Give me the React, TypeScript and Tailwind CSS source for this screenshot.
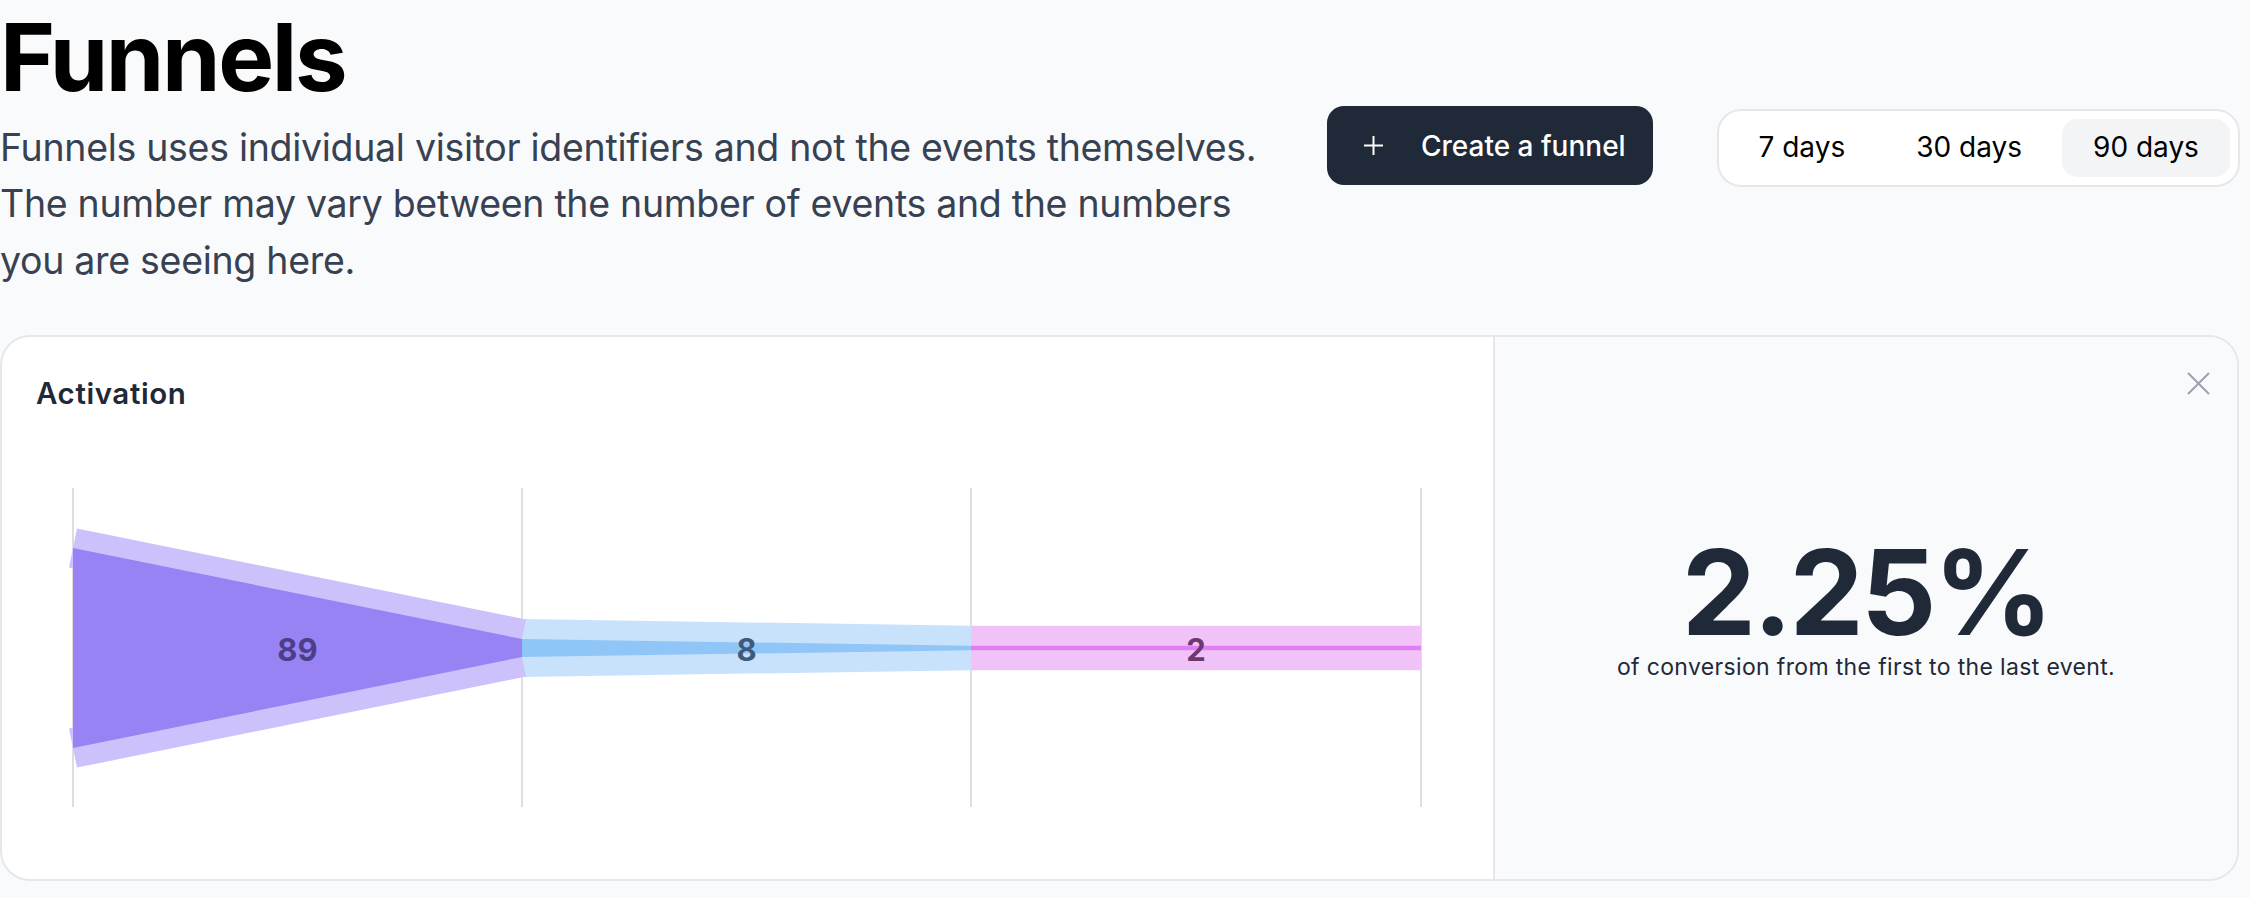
import React from 'react'

const steps = [
  { value: 89, fill: '#9882f4', border: '#ccc1fa', label: '#4b3f87' },
  { value: 8, fill: '#90c5f8', border: '#c8e2fb', label: '#3e5b79' },
  { value: 2, fill: '#e07ff1', border: '#f0c2f8', label: '#6d3770' },
]

// svg coords (page x - 2, page y - 414)
const gridX = [71, 520, 969, 1419]
const cy = 234
const h = (v: number) => (v / 89) * 200

function FunnelChart() {
  return (
    <svg width="1491" height="464" viewBox="0 0 1491 464" className="block">
      {gridX.map((x) => (
        <line key={x} x1={x} x2={x} y1={74} y2={393} stroke="#dedede" strokeWidth={2} />
      ))}
      {steps
        .map((s, i) => {
          const next = steps[i + 1]?.value ?? s.value
          const x0 = gridX[i]
          const x1 = gridX[i + 1]
          return (
            <g key={'b' + i}>
              <line x1={x0} y1={cy - h(s.value) / 2} x2={x1} y2={cy - h(next) / 2} stroke={s.border} strokeWidth={40} />
              <line x1={x0} y1={cy + h(s.value) / 2} x2={x1} y2={cy + h(next) / 2} stroke={s.border} strokeWidth={40} />
            </g>
          )
        })
        .reverse()}
      {steps.map((s, i) => {
        const next = steps[i + 1]?.value ?? s.value
        const x0 = gridX[i]
        const x1 = gridX[i + 1]
        const pts = [
          [x0, cy - h(s.value) / 2],
          [x1, cy - h(next) / 2],
          [x1, cy + h(next) / 2],
          [x0, cy + h(s.value) / 2],
        ]
          .map((p) => p.join(','))
          .join(' ')
        return <polygon key={'f' + i} points={pts} fill={s.fill} />
      })}
      {steps.map((s, i) => (
        <text
          key={'t' + i}
          x={(gridX[i] + gridX[i + 1]) / 2}
          y={cy + 1}
          textAnchor="middle"
          dominantBaseline="central"
          fill={s.label}
          className="text-[31px] font-bold"
        >
          {s.value}
        </text>
      ))}
    </svg>
  )
}

export default function App() {
  const ranges = ['7 days', '30 days', '90 days']
  const active = '90 days'

  return (
    <div className="min-h-screen bg-[#f9fafb] font-[Inter,sans-serif]">
      <div className="pr-[11px] pt-[10px]">
        {/* Header */}
        <div className="flex items-start">
          <div className="w-[1300px] shrink-0">
            <h1 className="text-[94px] font-bold leading-none tracking-tight text-black">Funnels</h1>
            <p className="mt-[16px] text-[37.5px] leading-[56.25px] tracking-[-0.3px] text-[#374151]">
              Funnels uses individual visitor identifiers and not the events themselves. The number may vary between
              the number of events and the numbers you are seeing here.
            </p>
          </div>
          <div className="ml-[27px] mt-[96px] flex shrink-0 items-start gap-[64px]">
            <button className="flex h-[79px] w-[326px] items-center gap-[37px] whitespace-nowrap rounded-[17px] bg-[#1f2937] pl-[36px] text-[28px] font-medium text-white">
              <svg width="21" height="21" viewBox="0 0 21 21" fill="none" stroke="currentColor" strokeWidth="2">
                <line x1="10.5" y1="1" x2="10.5" y2="20" />
                <line x1="1" y1="10.5" x2="20" y2="10.5" />
              </svg>
              Create a funnel
            </button>
            <div className="mt-[3px] flex shrink-0 gap-[8px] rounded-[24px] border-2 border-gray-200 bg-white p-[8px]">
              {ranges.map((r) => (
                <button
                  key={r}
                  className={
                    'h-[58px] whitespace-nowrap rounded-[15px] px-[31.5px] pb-[2px] text-[28px] text-black ' +
                    (r === active ? 'bg-gray-100' : '')
                  }
                >
                  {r}
                </button>
              ))}
            </div>
          </div>
        </div>

        {/* Funnel card */}
        <div className="mt-[46px] flex h-[546px] overflow-hidden rounded-[30px] border-2 border-gray-200 bg-white">
          <div className="flex-1">
            <h2 className="pl-[34px] pt-[35px] text-[29.5px] leading-[42px] font-semibold tracking-[0.02em] text-[#1f2937]">
              Activation
            </h2>
            <FunnelChart />
          </div>
          <div className="relative flex w-[744px] flex-col items-center justify-center border-l-2 border-gray-200 bg-[#f9fafb]">
            <button className="absolute right-[27px] top-[35px] text-gray-400">
              <svg width="23" height="23" viewBox="0 0 23 23" stroke="currentColor" strokeWidth="2">
                <line x1="1" y1="1" x2="22" y2="22" />
                <line x1="22" y1="1" x2="1" y2="22" />
              </svg>
            </button>
            <div className="text-[118px] font-bold leading-none tracking-tight text-[#1f2937]">2.25%</div>
            <div className="text-[23px] leading-[32px] tracking-[0.015em] text-[#1f2937]">
              of conversion from the first to the last event.
            </div>
          </div>
        </div>
      </div>
    </div>
  )
}
